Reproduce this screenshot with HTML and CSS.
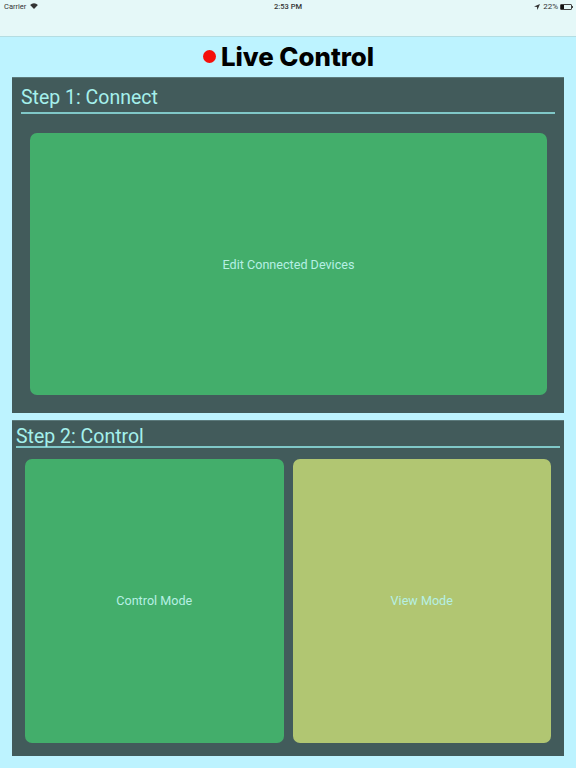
FILE: index.html
```html
<!DOCTYPE html>
<html lang="en">
<head>
    <meta charset="utf-8">
    <title>Live Control</title>
    <link rel="stylesheet" href="styles.css">
</head>
<body>
    <div class="status-bar">
        <div class="status-left">
            <span>Carrier</span>
            <svg class="wifi" width="8" height="6" viewBox="0 0 9 7">
                <path d="M4.5 7 L0 2.2 A6.5 6.5 0 0 1 9 2.2 Z" fill="#333"/>
            </svg>
        </div>
        <div class="status-time">2:53 PM</div>
        <div class="status-right">
            <svg class="arrow" width="6" height="6" viewBox="0 0 6 6">
                <path d="M6 0 L0 2.6 L2.9 3.1 L3.4 6 Z" fill="#333"/>
            </svg>
            <span class="percent">22%</span>
            <div class="battery"><div class="battery-level"></div></div>
        </div>
    </div>

    <h1 class="title"><span class="record-dot"></span>Live Control</h1>

    <section class="panel panel-connect">
        <h2 class="panel-heading">Step 1: Connect</h2>
        <div class="connect-body">
            <button class="tile green">Edit Connected Devices</button>
        </div>
    </section>

    <section class="panel panel-control">
        <h2 class="panel-heading">Step 2: Control</h2>
        <div class="control-body">
            <button class="tile green">Control Mode</button>
            <button class="tile olive">View Mode</button>
        </div>
    </section>
</body>
</html>
```

FILE: styles.css
```css
* {
    box-sizing: border-box;
}

html, body {
    height: 100%;
}

body {
    margin: 0;
    background-color: #bdf3ff;
    font-family: "Inter", "Liberation Sans", sans-serif;
    overflow: hidden;
}

.status-bar {
    display: grid;
    grid-template-columns: 1fr auto 1fr;
    height: 37px;
    padding: 2px 4px 0;
    background-color: #e5f8f8;
    border-bottom: 1px solid #b4dde2;
    font-family: "Roboto", sans-serif;
    font-size: 7.5px;
    line-height: 9px;
    color: #333;
}

.status-left {
    display: flex;
    align-items: flex-start;
    gap: 4px;
}

.status-left .wifi {
    margin-top: 1px;
}

.status-time {
    font-weight: 500;
}

.status-right {
    display: flex;
    align-items: flex-start;
    justify-content: flex-end;
    gap: 2px;
}

.status-right .arrow {
    margin-top: 2px;
    margin-right: 1px;
}

.percent {
    font-size: 8px;
}

.battery {
    position: relative;
    width: 12px;
    height: 6px;
    margin-top: 2px;
    border: 1px solid #444;
    border-radius: 1px;
}

.battery::after {
    content: "";
    position: absolute;
    right: -2px;
    top: 1px;
    width: 1px;
    height: 2px;
    background-color: #444;
}

.battery-level {
    width: 3px;
    height: 100%;
    background-color: #111;
}

.title {
    display: flex;
    align-items: center;
    justify-content: center;
    gap: 5px;
    height: 40px;
    margin: 0;
    padding: 0 0 2px 1px;
    font-size: 25.8px;
    font-weight: 800;
    color: #000;
}

.record-dot {
    width: 13px;
    height: 13px;
    border-radius: 50%;
    background-color: #f50f0a;
}

.panel {
    margin: 0 12px;
    height: 336px;
    background-color: #425b5b;
    box-shadow: inset 0 1px 0 #5c7a7c;
}

.panel-control {
    margin-top: 7px;
}

.panel-heading {
    margin: 0;
    font-family: "Roboto", sans-serif;
    font-size: 19.5px;
    font-weight: 400;
    color: #a5f0ec;
    border-bottom: 2px solid #80c8c8;
}

.panel-connect .panel-heading {
    margin: 0 9px;
    height: 37px;
    padding-top: 7px;
    line-height: 28px;
}

.panel-control .panel-heading {
    margin: 0 4px;
    height: 28px;
    padding-top: 3px;
    line-height: 28px;
}

.connect-body {
    display: flex;
    height: 262px;
    margin: 19px 17px 0 18px;
}

.control-body {
    display: flex;
    gap: 9px;
    height: 284px;
    margin: 11px 13px 0 13px;
}

.tile {
    flex: 1;
    padding: 0;
    border: none;
    border-radius: 7px;
    font-family: "Roboto", sans-serif;
    font-size: 12.6px;
    color: #b6f0e4;
}

.control-body .tile {
    padding-bottom: 2px;
}

.green {
    background-color: #43ae6b;
}

.olive {
    background-color: #b1c672;
}
```
